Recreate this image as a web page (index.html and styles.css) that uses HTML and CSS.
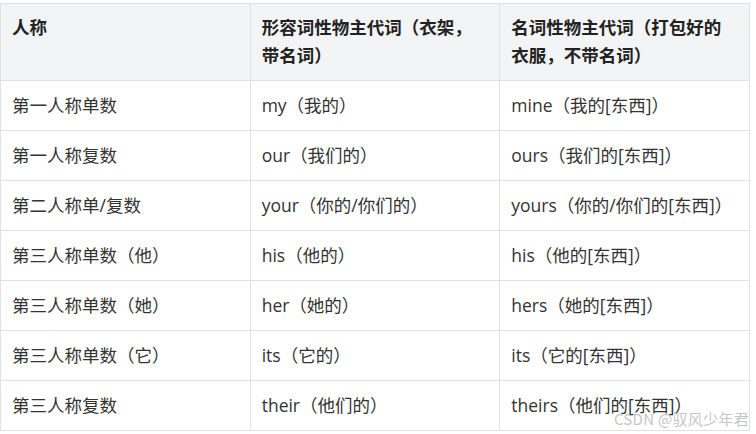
FILE: index.html
```html
<!DOCTYPE html>
<html lang="zh-CN">
<head>
<meta charset="utf-8">
<title>物主代词</title>
<link rel="stylesheet" href="styles.css">
</head>
<body>
<div class="wrap">
<table class="tbl">
<thead>
<tr><th>人称</th><th>形容词性物主代词（衣架，带名词）</th><th>名词性物主代词（打包好的衣服，不带名词）</th></tr>
</thead>
<tbody>
<tr><td>第一人称单数</td><td>my（我的）</td><td>mine（我的[东西]）</td></tr>
<tr><td>第一人称复数</td><td>our（我们的）</td><td>ours（我们的[东西]）</td></tr>
<tr><td>第二人称单/复数</td><td>your（你的/你们的）</td><td>yours（你的/你们的[东西]）</td></tr>
<tr><td>第三人称单数（他）</td><td>his（他的）</td><td>his（他的[东西]）</td></tr>
<tr><td>第三人称单数（她）</td><td>her（她的）</td><td>hers（她的[东西]）</td></tr>
<tr><td>第三人称单数（它）</td><td>its（它的）</td><td>its（它的[东西]）</td></tr>
<tr><td>第三人称复数</td><td>their（他们的）</td><td>theirs（他们的[东西]）</td></tr>
</tbody>
</table>
<span class="wm">CSDN @驭风少年君</span>
</div>
</body>
</html>
```
FILE: styles.css
```css
html, body {
  margin: 0;
  padding: 0;
  background: #fff;
}
body {
  font-family: "Open Sans", "Noto Sans CJK SC", sans-serif;
}
.wrap {
  position: relative;
  width: 750px;
  padding-top: 3px;
}
.tbl {
  width: 750px;
  border-collapse: collapse;
  table-layout: fixed;
  font-size: 17.5px;
  line-height: 28px;
}
.tbl th, .tbl td {
  border: 1px solid #dfe2e5;
  padding: 10.5px 12px 10.5px 11px;
  text-align: left;
  vertical-align: top;
}
.tbl th {
  background: #f3f4f5;
  color: #222;
  font-weight: bold;
  padding-top: 9px;
}
.tbl td {
  color: #333;
}
.wm {
  position: absolute;
  right: 1px;
  bottom: 3px;
  font-family: "Noto Sans CJK SC", sans-serif;
  font-size: 15px;
  line-height: 18px;
  letter-spacing: 0.3px;
  color: rgba(170, 170, 170, 0.7);
}
```
